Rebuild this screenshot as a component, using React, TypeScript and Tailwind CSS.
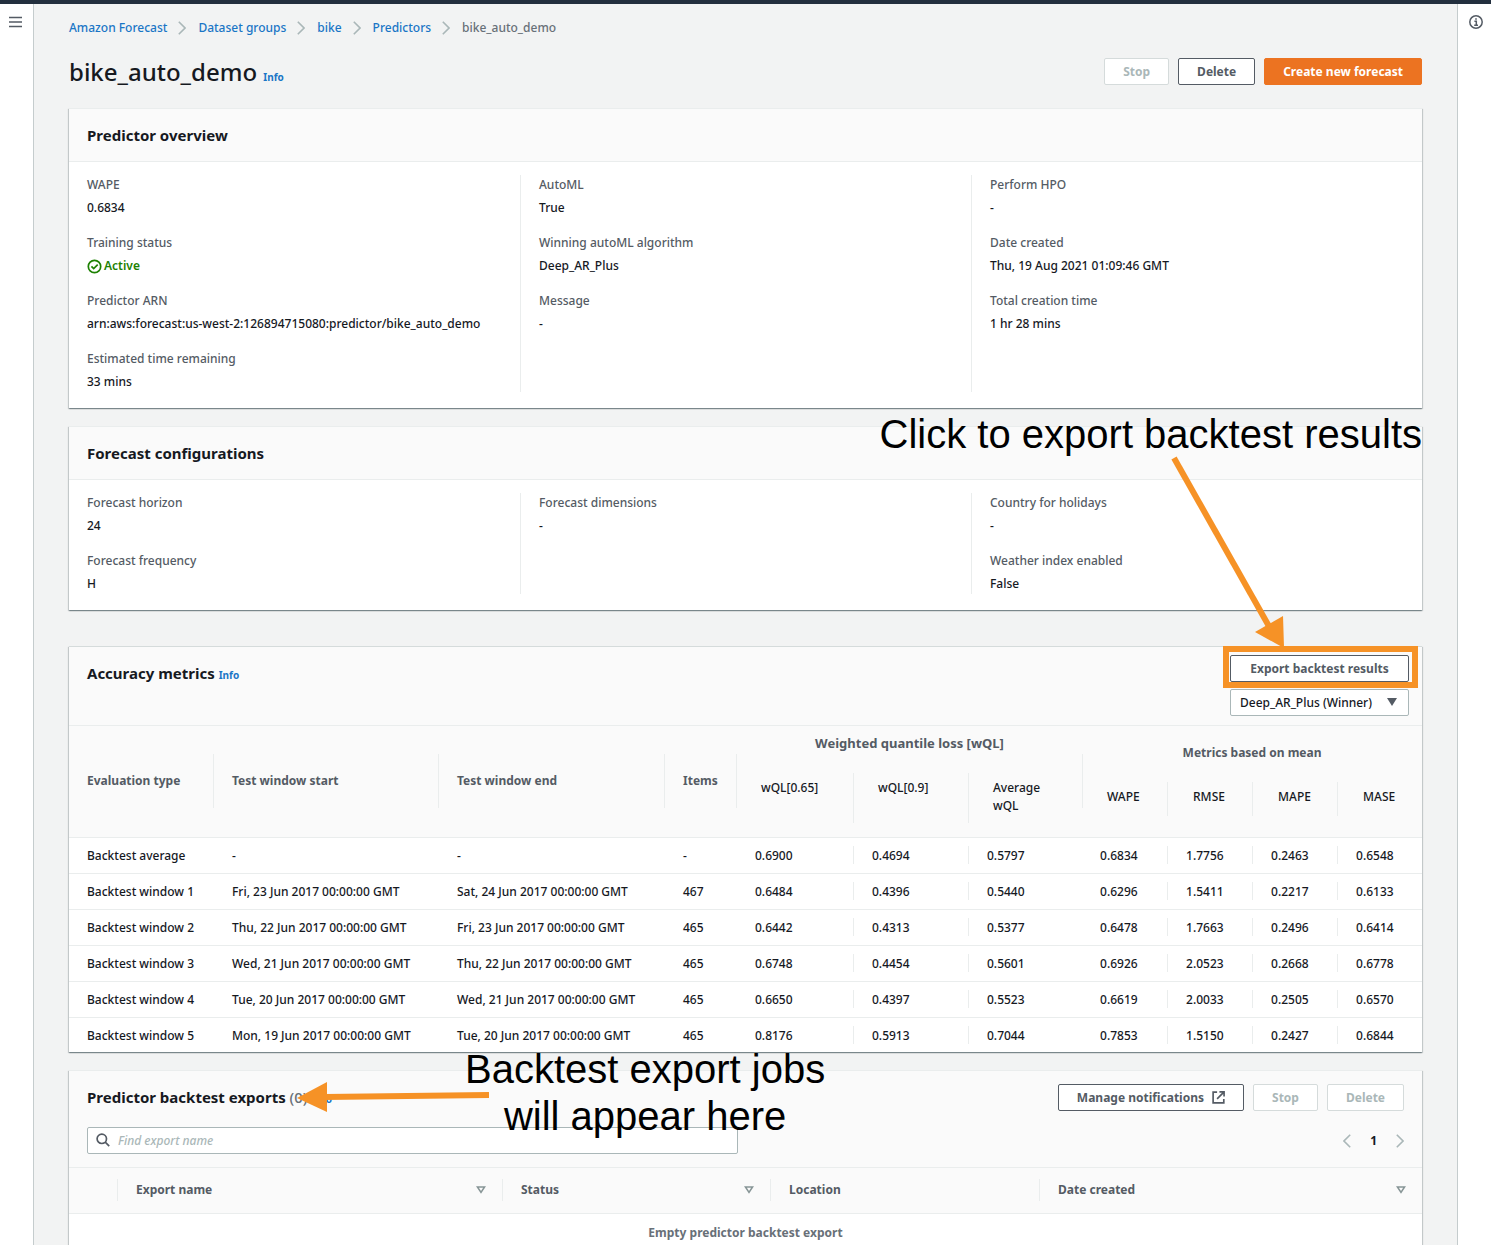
import type { ReactNode } from "react";

const card =
  "relative border-t bg-white shadow-[0_1px_1px_0_rgba(0,28,36,0.3),1px_1px_1px_0_rgba(0,28,36,0.15),-1px_1px_1px_0_rgba(0,28,36,0.15)]";
const button =
  "flex h-[27px] items-center justify-center rounded-xs border px-[18px] text-[12px] leading-[27px] font-bold whitespace-nowrap";
const normal = "border-[#545b64] bg-white text-[#545b64]";
const disabled = "border-[#d5dbdb] bg-white text-[#aab7b8]";

function Chevron({ flip = false }: { flip?: boolean }) {
  return (
    <svg width="8" height="14" viewBox="0 0 8 14" fill="none" stroke="#aab7b8" strokeWidth="1.6" aria-hidden="true">
      <path d={flip ? "M7.2.8 1 7l6.2 6.2" : "M.8.8 7 7 .8 13.2"} />
    </svg>
  );
}

function SortIcon() {
  return (
    <svg width="10" height="8" viewBox="0 0 10 8" fill="none" stroke="#879596" strokeWidth="1.6" aria-hidden="true">
      <path d="M1.4 1h7.2L5 6.4z" />
    </svg>
  );
}

function Info() {
  return (
    <a href="#info" className="text-[10px] font-bold text-[#1a76c6]">
      Info
    </a>
  );
}

function Breadcrumbs() {
  const links = ["Amazon Forecast", "Dataset groups", "bike", "Predictors"];
  return (
    <nav aria-label="Breadcrumbs">
      <ol className="flex h-[18px] items-center text-[12px]">
        {links.map((l) => (
          <li key={l} className="flex items-center">
            <a href="#crumb" className="font-medium text-[#1a76c6]">
              {l}
            </a>
            <span className="pr-[12px] pl-[11px]">
              <Chevron />
            </span>
          </li>
        ))}
        <li className="font-medium text-[#687078]">bike_auto_demo</li>
      </ol>
    </nav>
  );
}

type Item = [string, ReactNode];

function KeyValueCard({ title, columns }: { title: string; columns: Item[][] }) {
  return (
    <section className={`${card} border-[#eaeded]`}>
      <div className="flex h-[53px] items-center border-b border-[#eaeded] bg-[#fafafa] px-[18px]">
        <h2 className="text-[15px] font-bold text-[#16191f]">{title}</h2>
      </div>
      <div className="grid grid-cols-3 pt-[13px] pb-[16px]">
        {columns.map((items, i) => (
          <dl key={i} className={i ? "border-l border-[#eaeded] px-[18px]" : "px-[18px]"}>
            {items.map(([k, v]) => (
              <div key={k} className="mb-[15px] last:mb-0">
                <dt className="mb-[3px] text-[12px] leading-[20px] font-medium text-[#545b64]">{k}</dt>
                <dd className="text-[12px] leading-[20px] font-medium text-[#16191f]">{v}</dd>
              </div>
            ))}
          </dl>
        ))}
      </div>
    </section>
  );
}

const active = (
  <span className="flex items-center gap-[2px] font-semibold text-[#1d8102]">
    <svg width="15" height="15" viewBox="0 0 15 15" fill="none" stroke="#1d8102" strokeWidth="1.7" aria-hidden="true">
      <circle cx="7.5" cy="7.5" r="6.2" />
      <path d="M4.4 7.3l2.3 2.3 4-4" />
    </svg>
    Active
  </span>
);

const overview: Item[][] = [
  [
    ["WAPE", "0.6834"],
    ["Training status", active],
    ["Predictor ARN", "arn:aws:forecast:us-west-2:126894715080:predictor/bike_auto_demo"],
    ["Estimated time remaining", "33 mins"],
  ],
  [
    ["AutoML", "True"],
    ["Winning autoML algorithm", "Deep_AR_Plus"],
    ["Message", "-"],
  ],
  [
    ["Perform HPO", "-"],
    ["Date created", "Thu, 19 Aug 2021 01:09:46 GMT"],
    ["Total creation time", "1 hr 28 mins"],
  ],
];

const configurations: Item[][] = [
  [
    ["Forecast horizon", "24"],
    ["Forecast frequency", "H"],
  ],
  [["Forecast dimensions", "-"]],
  [
    ["Country for holidays", "-"],
    ["Weather index enabled", "False"],
  ],
];

const rows = [
  ["Backtest average", "-", "-", "-", "0.6900", "0.4694", "0.5797", "0.6834", "1.7756", "0.2463", "0.6548"],
  ["Backtest window 1", "Fri, 23 Jun 2017 00:00:00 GMT", "Sat, 24 Jun 2017 00:00:00 GMT", "467", "0.6484", "0.4396", "0.5440", "0.6296", "1.5411", "0.2217", "0.6133"],
  ["Backtest window 2", "Thu, 22 Jun 2017 00:00:00 GMT", "Fri, 23 Jun 2017 00:00:00 GMT", "465", "0.6442", "0.4313", "0.5377", "0.6478", "1.7663", "0.2496", "0.6414"],
  ["Backtest window 3", "Wed, 21 Jun 2017 00:00:00 GMT", "Thu, 22 Jun 2017 00:00:00 GMT", "465", "0.6748", "0.4454", "0.5601", "0.6926", "2.0523", "0.2668", "0.6778"],
  ["Backtest window 4", "Tue, 20 Jun 2017 00:00:00 GMT", "Wed, 21 Jun 2017 00:00:00 GMT", "465", "0.6650", "0.4397", "0.5523", "0.6619", "2.0033", "0.2505", "0.6570"],
  ["Backtest window 5", "Mon, 19 Jun 2017 00:00:00 GMT", "Tue, 20 Jun 2017 00:00:00 GMT", "465", "0.8176", "0.5913", "0.7044", "0.7853", "1.5150", "0.2427", "0.6844"],
];

const divided = [5, 6, 8, 9, 10];

function MetricsTable() {
  return (
    <table className="w-full table-fixed text-left text-[12px] font-medium text-[#16191f]">
      <colgroup>
        <col className="w-[145px]" />
        <col className="w-[225px]" />
        <col className="w-[226px]" />
        <col className="w-[72px]" />
        <col className="w-[116px]" />
        <col className="w-[115px]" />
        <col className="w-[114px]" />
        <col className="w-[85px]" />
        <col className="w-[85px]" />
        <col className="w-[85px]" />
        <col className="w-[85px]" />
      </colgroup>
      <thead className="bg-[#fafafa]">
        <tr className="h-[47px] text-[#545b64]">
          {["Evaluation type", "Test window start", "Test window end", "Items"].map((h) => (
            <th key={h} scope="col" rowSpan={2} className="border-b border-[#eaeded] p-0">
              <div className="flex h-[54px] items-center border-r border-[#eaeded] pl-[18px]">{h}</div>
            </th>
          ))}
          <th scope="colgroup" colSpan={3} className="p-0 pt-[7px] text-center align-top text-[13px] leading-[20px]">
            Weighted quantile loss [wQL]
          </th>
          <th scope="colgroup" colSpan={4} className="relative p-0 pt-[17px] text-center align-top leading-[20px]">
            <span className="absolute bottom-0 left-0 h-[19px] w-px bg-[#eaeded]" />
            Metrics based on mean
          </th>
        </tr>
        <tr className="h-[64px]">
          {["wQL[0.65]", "wQL[0.9]", "Average wQL"].map((h, i) => (
            <th key={h} scope="col" className="border-b border-[#eaeded] p-0 align-top font-medium">
              <div className={`h-[50px] pt-[6px] pr-[30px] pl-[24px] leading-[18px] ${i ? "border-l border-[#eaeded]" : ""}`}>{h}</div>
            </th>
          ))}
          {["WAPE", "RMSE", "MAPE", "MASE"].map((h, i) => (
            <th key={h} scope="col" className="relative border-b border-[#eaeded] p-0 pt-[9px] align-top font-medium">
              {i === 0 && <span className="absolute top-0 left-0 h-[35px] w-px bg-[#eaeded]" />}
              <div className={`h-[34px] pt-[6px] pl-[25px] leading-[18px] ${i ? "border-l border-[#eaeded]" : ""}`}>{h}</div>
            </th>
          ))}
        </tr>
      </thead>
      <tbody>
        {rows.map((r) => (
          <tr key={r[0]} className="h-[36px] border-b border-[#eaeded] last:h-[35px] last:border-b-0">
            {r.map((c, i) => (
              <td key={i} className="p-0 whitespace-nowrap">
                <div className={`h-[18px] pl-[18px] leading-[20px] ${divided.includes(i) ? "border-l border-[#eaeded]" : ""}`}>{c}</div>
              </td>
            ))}
          </tr>
        ))}
      </tbody>
    </table>
  );
}

function AccuracyCard() {
  return (
    <section className={`${card} border-[#d5dbdb]`}>
      <div className="flex items-start justify-between border-b border-[#eaeded] bg-[#fafafa] pt-[8px] pr-[13px] pb-[9px] pl-[18px]">
        <h2 className="mt-[7px] text-[15px] leading-[22px] font-bold text-[#16191f]">
          Accuracy metrics <Info />
        </h2>
        <div className="flex w-[179px] flex-col gap-[7px]">
          <div className="relative">
            <button type="button" className={`${button} ${normal} w-full`}>
              Export backtest results
            </button>
            <span className="pointer-events-none absolute -top-[9px] -right-[9px] -bottom-[6px] -left-[7px] border-6 border-[#f69226]" />
          </div>
          <div className="relative">
            <select
              aria-label="Algorithm"
              className="block h-[27px] w-full appearance-none rounded-xs border border-[#aab7b8] bg-white pl-[9px] text-[12px] font-medium text-[#16191f]"
            >
              <option>Deep_AR_Plus (Winner)</option>
            </select>
            <svg width="10" height="8" viewBox="0 0 10 8" className="pointer-events-none absolute top-[9px] right-[12px]" aria-hidden="true">
              <path d="M0 0h10L5 8z" fill="#545b64" />
            </svg>
          </div>
        </div>
      </div>
      <MetricsTable />
      <p className="pointer-events-none absolute -top-[236px] right-0 font-['Liberation_Sans',sans-serif] text-[40px] leading-[47px] whitespace-nowrap text-black">
        Click to export backtest results
      </p>
      <svg width="120" height="192" viewBox="0 0 120 192" className="pointer-events-none absolute -top-[191px] right-[133px]" aria-hidden="true">
        <path d="M5 2 101 172" stroke="#f69226" strokeWidth="6" />
        <path d="M86 176 114 160 115 192z" fill="#f69226" />
      </svg>
    </section>
  );
}

function ExportsCard() {
  return (
    <section className={`${card} grow border-[#eaeded]`}>
      <div className="border-b border-[#eaeded] bg-[#fafafa] pt-[13px] pb-[13px] pl-[18px]">
        <div className="flex h-[27px] items-center justify-between pr-[18px]">
          <h2 className="text-[15px] font-bold text-[#16191f]">
            Predictor backtest exports <span className="font-medium text-[#687078]">(0)</span> <Info />
          </h2>
          <div className="flex gap-[9px]">
            <button type="button" className={`${button} ${normal} gap-[8px]`}>
              Manage notifications
              <svg width="13" height="13" viewBox="0 0 14 14" fill="none" stroke="#545b64" strokeWidth="1.8" aria-hidden="true">
                <path d="M5.5 1.3H1.2v11.5h11.5V8.6M8 1h5v5M13 1 5.5 8.5" />
              </svg>
            </button>
            <button type="button" disabled className={`${button} ${disabled}`}>
              Stop
            </button>
            <button type="button" disabled className={`${button} ${disabled}`}>
              Delete
            </button>
          </div>
        </div>
        <div className="mt-[16px] flex items-center justify-between pr-[18px]">
          <label className="relative block w-[651px]">
            <svg width="14" height="14" viewBox="0 0 14 14" fill="none" stroke="#545b64" strokeWidth="1.7" className="absolute top-[6px] left-[9px]" aria-hidden="true">
              <circle cx="5.8" cy="5.8" r="4.7" />
              <path d="M9.2 9.2 13.2 13.2" />
            </svg>
            <input
              type="text"
              aria-label="Find export name"
              placeholder="Find export name"
              className="block h-[27px] w-full rounded-xs border border-[#aab7b8] bg-white pl-[30px] text-[12px] font-medium placeholder:text-[#aab7b8] placeholder:italic"
            />
          </label>
          <div className="flex items-center">
            <button type="button" aria-label="Previous page">
              <Chevron flip />
            </button>
            <span className="px-[19px] text-[12px] font-bold text-[#16191f]">1</span>
            <button type="button" aria-label="Next page">
              <Chevron />
            </button>
          </div>
        </div>
      </div>
      <table className="w-full table-fixed text-left text-[12px] text-[#545b64]">
        <colgroup>
          <col className="w-[48px]" />
          <col className="w-[385px]" />
          <col className="w-[268px]" />
          <col className="w-[269px]" />
          <col className="w-[383px]" />
        </colgroup>
        <thead className="bg-[#fafafa]">
          <tr className="h-[45px] border-b border-[#eaeded]">
            <td />
            {["Export name", "Status", "Location", "Date created"].map((h) => (
              <th key={h} scope="col" className="p-0">
                <div className="flex h-[22px] items-center justify-between border-l border-[#eaeded] pr-[16px] pl-[18px]">
                  {h}
                  {h !== "Location" && <SortIcon />}
                </div>
              </th>
            ))}
          </tr>
        </thead>
        <tbody>
          <tr>
            <td colSpan={5} className="pt-[9px] text-center leading-[20px] font-bold text-[#687078]">
              Empty predictor backtest export
            </td>
          </tr>
        </tbody>
      </table>
      <p className="pointer-events-none absolute -top-[25px] left-[396px] text-center font-['Liberation_Sans',sans-serif] text-[40px] leading-[47px] whitespace-nowrap text-black">
        Backtest export jobs
        <br />
        will appear here
      </p>
      <svg width="194" height="32" viewBox="0 0 194 32" className="pointer-events-none absolute top-[10px] left-[228px]" aria-hidden="true">
        <path d="M192 14 28 16" stroke="#f69226" strokeWidth="6" />
        <path d="M0 17 30 1v30z" fill="#f69226" />
      </svg>
    </section>
  );
}

export default function App() {
  return (
    <div className="flex min-h-screen flex-col bg-[#f2f3f3] font-['Noto_Sans',sans-serif]">
      <header className="h-[4px] bg-[#232f3e]" />
      <div className="flex grow">
        <aside className="w-[34px] shrink-0 border-r border-[#c5cccd] bg-white pt-[12px] pl-[9px]">
          <button type="button" aria-label="Open navigation" className="block">
            <svg width="13" height="12" viewBox="0 0 13 12" stroke="#545b64" strokeWidth="1.6" aria-hidden="true">
              <path d="M0 1.5h13M0 6h13M0 10.5h13" />
            </svg>
          </button>
        </aside>
        <main className="flex min-w-0 grow flex-col px-[35px] pt-[15px]">
          <Breadcrumbs />
          <div className="mt-[21px] flex h-[27px] items-center justify-between">
            <h1 className="text-[24px] font-medium text-[#16191f]">
              bike_auto_demo <Info />
            </h1>
            <div className="flex gap-[9px]">
              <button type="button" disabled className={`${button} ${disabled}`}>
                Stop
              </button>
              <button type="button" className={`${button} ${normal}`}>
                Delete
              </button>
              <button type="button" className={`${button} border-[#ec7321] bg-[#ec7321] text-white`}>
                Create new forecast
              </button>
            </div>
          </div>
          <div className="mt-[23px] flex grow flex-col">
            <KeyValueCard title="Predictor overview" columns={overview} />
            <div className="mt-[18px] mb-[36px]">
              <KeyValueCard title="Forecast configurations" columns={configurations} />
            </div>
            <AccuracyCard />
            <div className="mt-[18px] flex grow flex-col">
              <ExportsCard />
            </div>
          </div>
        </main>
        <aside className="w-[34px] shrink-0 border-l border-[#c5cccd] bg-white pt-[11px] pl-[11px]">
          <button type="button" aria-label="Open help panel" className="block">
            <svg width="14" height="14" viewBox="0 0 14 14" fill="none" stroke="#545b64" strokeWidth="1.5" aria-hidden="true">
              <circle cx="7" cy="7" r="6.2" />
              <path d="M5.4 6.2H7.3V10M5.2 10.2h3.8M6.2 3.9h1.6" />
            </svg>
          </button>
        </aside>
      </div>
    </div>
  );
}
